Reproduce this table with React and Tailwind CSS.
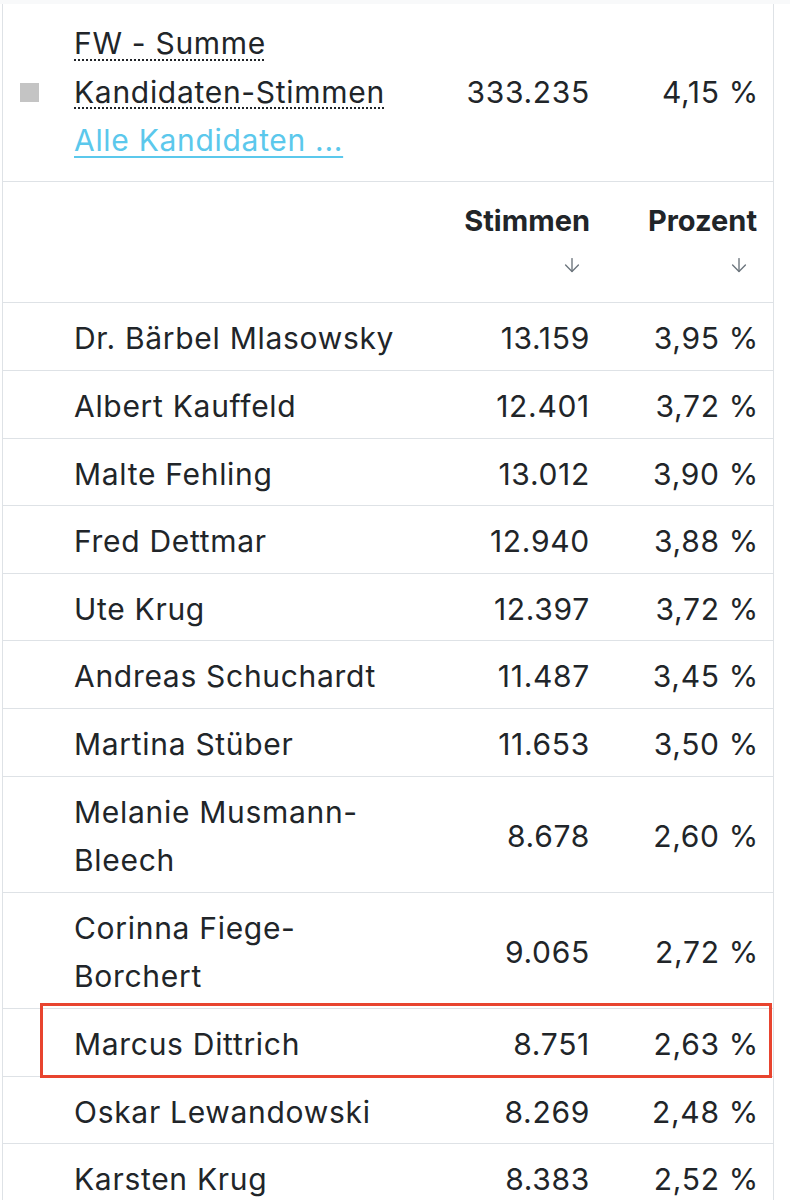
import { ArrowDown } from 'lucide-react';

const rows = [
  ['Dr. Bärbel Mlasowsky', '13.159', '3,95 %'],
  ['Albert Kauffeld', '12.401', '3,72 %'],
  ['Malte Fehling', '13.012', '3,90 %'],
  ['Fred Dettmar', '12.940', '3,88 %'],
  ['Ute Krug', '12.397', '3,72 %'],
  ['Andreas Schuchardt', '11.487', '3,45 %'],
  ['Martina Stüber', '11.653', '3,50 %'],
  ['Melanie Musmann-Bleech', '8.678', '2,60 %'],
  ['Corinna Fiege-Borchert', '9.065', '2,72 %'],
  ['Marcus Dittrich', '8.751', '2,63 %', true],
  ['Oskar Lewandowski', '8.269', '2,48 %'],
  ['Karsten Krug', '8.383', '2,52 %'],
];

const grid = 'grid grid-cols-[71px_1fr_186px_167px] border-b border-[#dee2e6]';

export default function App() {
  return (
    <div className="w-[790px] min-h-[1200px] bg-white text-[#212529] text-[30px] leading-[48.6px] tracking-[0.7px] font-['Inter',sans-serif] overflow-hidden">
      <div className="h-[4px] bg-[#f8f9fa]" />
      <div className="ml-[2px] w-[772px] border-x border-[#dee2e6]">
        {/* Party summary */}
        <div className={grid}>
          <div className="flex items-center pl-[17px]">
            <span className="block w-[19px] h-[19px] bg-[#c4c4c4]" />
          </div>
          <div className="pt-[15px] pb-[16px] pr-[16px]">
            <span className="underline decoration-dotted decoration-[2px] underline-offset-[5px]">
              FW - Summe Kandidaten-Stimmen
            </span>
            <br />
            <a href="#" className="text-[#5bc8ec] underline decoration-[2px] underline-offset-[5px]">
              Alle Kandidaten ...
            </a>
          </div>
          <div className="flex items-center justify-end pr-[16px]">333.235</div>
          <div className="flex items-center justify-end pr-[14px]">4,15 %</div>
        </div>

        {/* Column header */}
        <div className={grid}>
          <div />
          <div />
          {['Stimmen', 'Prozent'].map((h) => (
            <div key={h} className="flex flex-col items-end pt-[15px] pb-[17px] pr-[16px]">
              <span className="font-bold text-[29px] tracking-normal">{h}</span>
              <span className="h-[40px] flex items-center pr-[7px] text-[#6c757d]">
                <ArrowDown size={22} strokeWidth={1.5} />
              </span>
            </div>
          ))}
        </div>

        {rows.map(([name, votes, pct, mark]) => (
          <div key={name} className={`${grid} relative`}>
            <div />
            <div className="pt-[11px] pb-[7px] pr-[16px]">{name}</div>
            <div className="flex items-center justify-end pt-[4px] pr-[16px]">{votes}</div>
            <div className="flex items-center justify-end pt-[4px] pr-[14px]">{pct}</div>
            {mark && (
              <div className="absolute left-[37px] right-[1px] top-[-6px] bottom-[-2px] border-[3px] border-[#e8442f] pointer-events-none" />
            )}
          </div>
        ))}
      </div>
    </div>
  );
}
